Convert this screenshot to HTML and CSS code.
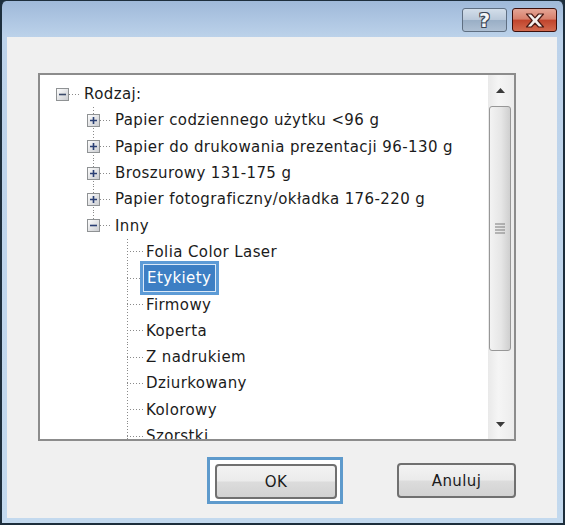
FILE: index.html
```html
<!DOCTYPE html>
<html lang="pl">
<head>
    <meta charset="UTF-8">
    <title>Rodzaj papieru</title>
    <link rel="stylesheet" href="styles.css">
</head>
<body>
    <div class="window">
        <div class="titlebar">
            <div class="caption-btn help-btn">?</div>
            <div class="caption-btn close-btn">
                <svg width="22" height="15" viewBox="0 0 22 15">
                    <path d="M2.5 1 L7.5 1 L11 4.8 L14.5 1 L19.5 1 L13.8 7.5 L19.5 14 L14.5 14 L11 10.2 L7.5 14 L2.5 14 L8.2 7.5 Z" fill="#f4f1ee" stroke="#4a1a14" stroke-width="1.2" stroke-linejoin="round"/>
                </svg>
            </div>
        </div>

        <div class="client">
            <div class="tree-box">
                <div class="tree">
                    <div class="row root">
                        <span class="node">
                            <svg width="13" height="13" viewBox="0 0 13 13"><rect x="0.5" y="0.5" width="12" height="12" fill="url(#exp)" stroke="#8f9294"/><path d="M3 6.5 H10" stroke="#3a4a6a" stroke-width="1.6"/></svg>
                        </span>
                        <span class="hline"></span>
                        <span class="label">Rodzaj:</span>
                    </div>

                    <div class="row lvl1">
                        <span class="node vline">
                            <svg width="13" height="13" viewBox="0 0 13 13"><rect x="0.5" y="0.5" width="12" height="12" fill="url(#exp)" stroke="#8f9294"/><path d="M3 6.5 H10 M6.5 3 V10" stroke="#2a3f74" stroke-width="1.6"/></svg>
                        </span>
                        <span class="hline"></span>
                        <span class="label">Papier codziennego użytku &lt;96 g</span>
                    </div>
                    <div class="row lvl1">
                        <span class="node vline">
                            <svg width="13" height="13" viewBox="0 0 13 13"><rect x="0.5" y="0.5" width="12" height="12" fill="url(#exp)" stroke="#8f9294"/><path d="M3 6.5 H10 M6.5 3 V10" stroke="#2a3f74" stroke-width="1.6"/></svg>
                        </span>
                        <span class="hline"></span>
                        <span class="label">Papier do drukowania prezentacji 96-130 g</span>
                    </div>
                    <div class="row lvl1">
                        <span class="node vline">
                            <svg width="13" height="13" viewBox="0 0 13 13"><rect x="0.5" y="0.5" width="12" height="12" fill="url(#exp)" stroke="#8f9294"/><path d="M3 6.5 H10 M6.5 3 V10" stroke="#2a3f74" stroke-width="1.6"/></svg>
                        </span>
                        <span class="hline"></span>
                        <span class="label">Broszurowy 131-175 g</span>
                    </div>
                    <div class="row lvl1">
                        <span class="node vline">
                            <svg width="13" height="13" viewBox="0 0 13 13"><rect x="0.5" y="0.5" width="12" height="12" fill="url(#exp)" stroke="#8f9294"/><path d="M3 6.5 H10 M6.5 3 V10" stroke="#2a3f74" stroke-width="1.6"/></svg>
                        </span>
                        <span class="hline"></span>
                        <span class="label">Papier fotograficzny/okładka 176-220 g</span>
                    </div>
                    <div class="row lvl1">
                        <span class="node vline-top">
                            <svg width="13" height="13" viewBox="0 0 13 13"><rect x="0.5" y="0.5" width="12" height="12" fill="url(#exp)" stroke="#8f9294"/><path d="M3 6.5 H10" stroke="#2a3f74" stroke-width="1.6"/></svg>
                        </span>
                        <span class="hline"></span>
                        <span class="label">Inny</span>
                    </div>

                    <div class="row lvl2"><span class="branch"></span><span class="label">Folia Color Laser</span></div>
                    <div class="row lvl2"><span class="branch"></span><span class="label selected">Etykiety</span></div>
                    <div class="row lvl2"><span class="branch"></span><span class="label">Firmowy</span></div>
                    <div class="row lvl2"><span class="branch"></span><span class="label">Koperta</span></div>
                    <div class="row lvl2"><span class="branch"></span><span class="label">Z nadrukiem</span></div>
                    <div class="row lvl2"><span class="branch"></span><span class="label">Dziurkowany</span></div>
                    <div class="row lvl2"><span class="branch"></span><span class="label">Kolorowy</span></div>
                    <div class="row lvl2"><span class="branch"></span><span class="label">Szorstki</span></div>
                </div>

                <div class="scrollbar">
                    <div class="arrow">
                        <svg width="9" height="5" viewBox="0 0 9 5"><path d="M0 5 L4.5 0 L9 5 Z" fill="#3b3b3b"/></svg>
                    </div>
                    <div class="track">
                        <div class="thumb">
                            <svg width="10" height="11" viewBox="0 0 10 11"><path d="M0 1 H10 M0 4 H10 M0 7 H10 M0 10 H10" stroke="#7d7d7d" stroke-width="1.2"/></svg>
                        </div>
                    </div>
                    <div class="arrow">
                        <svg width="9" height="5" viewBox="0 0 9 5"><path d="M0 0 L9 0 L4.5 5 Z" fill="#3b3b3b"/></svg>
                    </div>
                </div>
            </div>

            <div class="actions">
                <div class="focus-ring">
                    <button class="btn">OK</button>
                </div>
                <button class="btn">Anuluj</button>
            </div>
        </div>
    </div>

    <svg width="0" height="0" class="defs">
        <defs>
            <linearGradient id="exp" x1="0" y1="0" x2="1" y2="1">
                <stop offset="0" stop-color="#ffffff"/>
                <stop offset="1" stop-color="#c9cbcf"/>
            </linearGradient>
        </defs>
    </svg>
</body>
</html>
```

FILE: styles.css
```css
* {
    margin: 0;
    padding: 0;
    box-sizing: border-box;
}

body {
    width: 565px;
    height: 525px;
    background: #1d2e3c;
    font-family: 'DejaVu Sans', Verdana, sans-serif;
    font-size: 15px;
    letter-spacing: 0.4px;
    color: #1b1b1b;
    overflow: hidden;
}

.defs {
    display: block;
    height: 0;
}

.window {
    width: 565px;
    height: 522px;
    margin: 1px 0 0 0;
    padding: 0 6px 5px 5px;
    border-left: 2px solid #1d2e3c;
    border-right: 2px solid #1d2e3c;
    background: linear-gradient(#9fb9d9 0, #bcd2ea 36px, #c3d9ee 100%);
    border-radius: 6px 6px 0 0;
    display: flex;
    flex-direction: column;
}

/* Title bar */
.titlebar {
    height: 36px;
    display: flex;
    justify-content: flex-end;
    align-items: flex-start;
    gap: 5px;
    padding-top: 7px;
}

.caption-btn {
    width: 45px;
    height: 24px;
    border-radius: 3px;
    display: flex;
    align-items: center;
    justify-content: center;
}

.help-btn {
    border: 1px solid #5f6f82;
    background: linear-gradient(#d3deea 0%, #bac9da 48%, #9aafc6 52%, #aebfd3 100%);
    color: #f4f6f8;
    font-family: 'DejaVu Sans', sans-serif;
    font-weight: bold;
    font-size: 19px;
    letter-spacing: 0;
    line-height: 1;
    text-shadow: -1px -1px 0 #3a4656, 1px -1px 0 #3a4656, -1px 1px 0 #3a4656, 1px 1px 0 #3a4656;
}

.close-btn {
    border: 1px solid #3c0f0b;
    background: linear-gradient(#e5a595 0%, #d7806c 45%, #c1452d 52%, #d36a4f 100%);
}

/* Client area */
.client {
    flex: 1;
    background: #f0f0f0;
    padding: 36px 41px 0 31px;
}

.tree-box {
    height: 368px;
    border: 2px solid #8c8c8c;
    background: #ffffff;
    display: flex;
    overflow: hidden;
}

.tree {
    flex: 1;
    padding-top: 6px;
}

.row {
    height: 26.3px;
    display: flex;
    align-items: center;
    white-space: nowrap;
}

.root {
    padding-left: 16px;
}

.lvl1 {
    padding-left: 47px;
}

.lvl2 {
    padding-left: 87px;
}

.node {
    width: 13px;
    height: 100%;
    display: flex;
    align-items: center;
    justify-content: center;
}

.node svg {
    display: block;
}

.vline {
    background: repeating-linear-gradient(to bottom, #8a8a8a 0 1px, transparent 1px 3px) no-repeat center / 1px 100%;
}

.vline-top {
    background: repeating-linear-gradient(to bottom, #8a8a8a 0 1px, transparent 1px 3px) no-repeat center top / 1px 50%;
}

.hline {
    width: 11px;
    height: 1px;
    margin-right: 1px;
    background: repeating-linear-gradient(to right, #8a8a8a 0 1px, transparent 1px 3px);
}

.branch {
    width: 16px;
    height: 100%;
    background:
        repeating-linear-gradient(to bottom, #8a8a8a 0 1px, transparent 1px 3px) no-repeat left top / 1px 100%,
        repeating-linear-gradient(to right, #8a8a8a 0 1px, transparent 1px 3px) no-repeat left center / 100% 1px;
}

.label {
    padding: 0 1px;
    border: 2px solid transparent;
}

.selected {
    background: #3d7fc4;
    color: #ffffff;
    border: 3px solid #5d9bd6;
    box-shadow: inset 0 0 0 1px #dbe9f7;
    padding: 5px 5px 5px 4px;
    margin-left: -3px;
}

/* Scrollbar */
.scrollbar {
    width: 26px;
    display: flex;
    flex-direction: column;
    background: linear-gradient(to right, #e9e9e9, #f5f5f5 40%, #ececec);
    padding-right: 2px;
}

.arrow {
    height: 30px;
    display: flex;
    align-items: center;
    justify-content: center;
}

.track {
    flex: 1;
    padding: 1px 1px;
}

.thumb {
    height: 245px;
    border: 1px solid #979797;
    border-radius: 3px;
    background: linear-gradient(to right, #f3f3f3, #e6e6e6 55%, #cfcfcf);
    display: flex;
    align-items: center;
    justify-content: center;
}

/* Buttons */
.actions {
    display: flex;
    align-items: center;
    padding: 16px 0 0 169px;
    gap: 54px;
}

.focus-ring {
    border: 3px solid #5e9acc;
    background: #ffffff;
    padding: 4px 3px 2px 5px;
}

.btn {
    width: 122px;
    height: 35px;
    border: 2px solid #707070;
    border-radius: 4px;
    background: linear-gradient(#f3f3f3 0%, #ebebeb 48%, #dcdcdc 52%, #d2d2d2 100%);
    font-family: 'DejaVu Sans', Verdana, sans-serif;
    font-size: 15px;
    letter-spacing: 0.4px;
    color: #1b1b1b;
}
```
